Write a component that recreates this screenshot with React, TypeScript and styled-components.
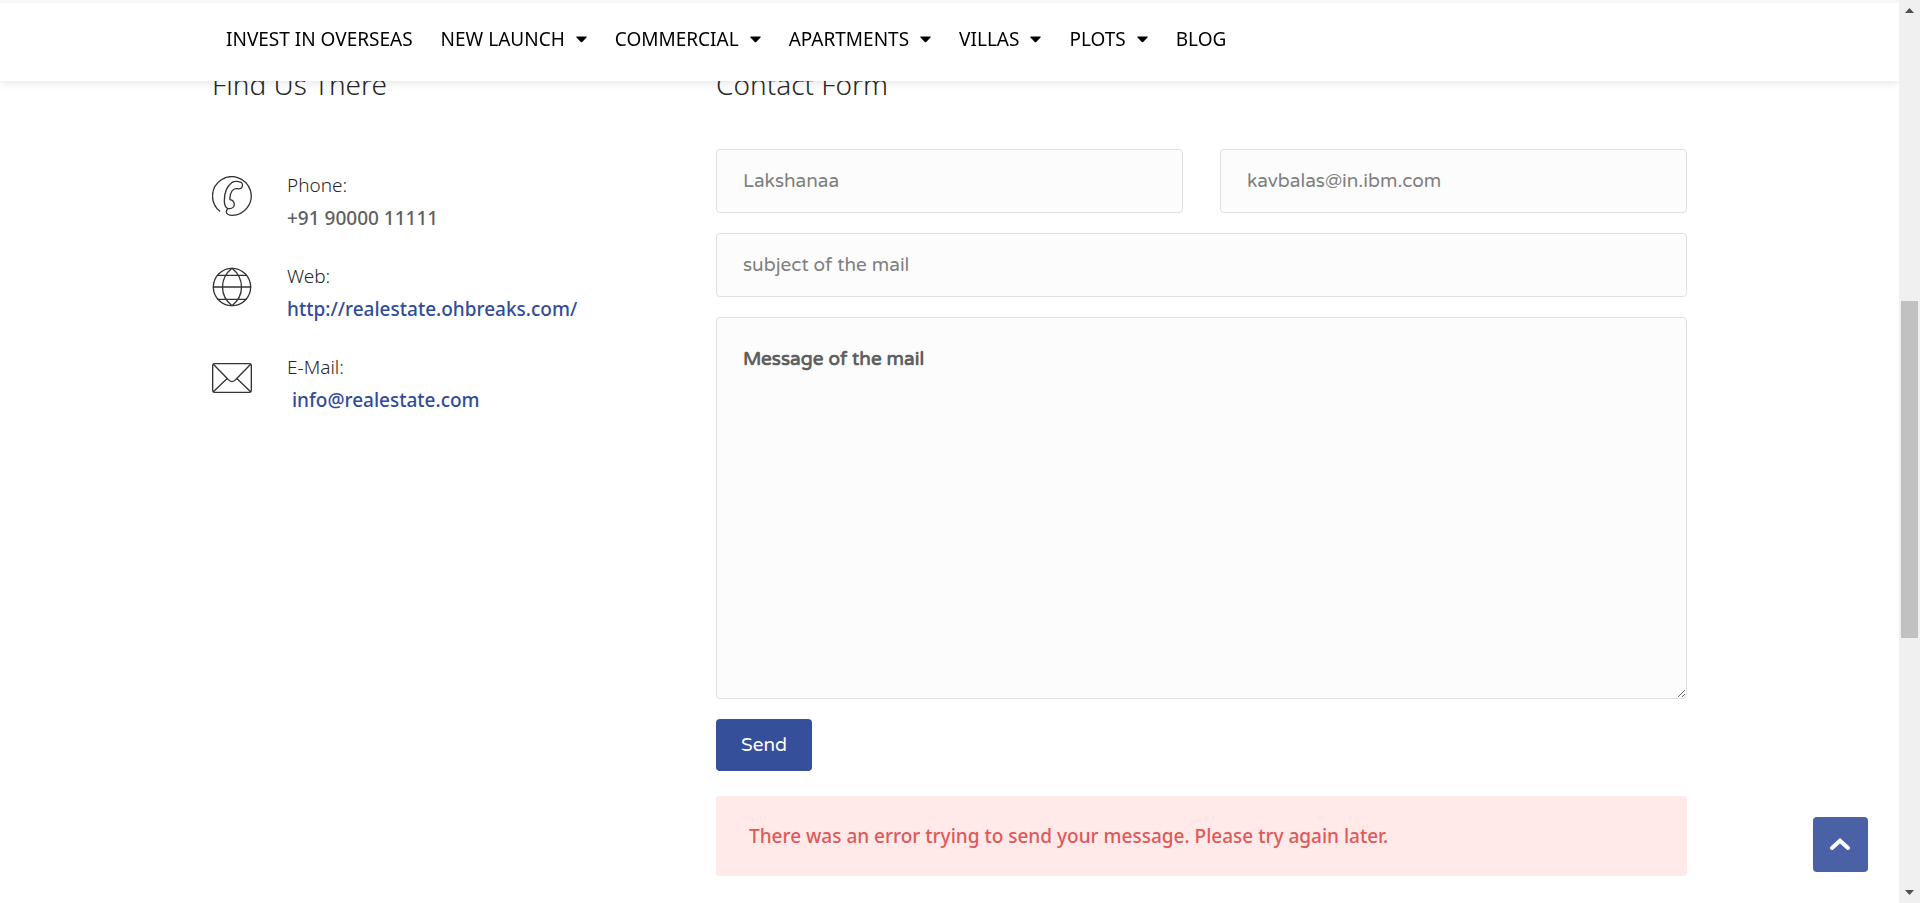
import React from "react";
import styled, { createGlobalStyle } from "styled-components";

const GlobalStyle = createGlobalStyle`
  *, *::before, *::after { box-sizing: border-box; }
  body {
    margin: 0;
    background: #fff;
    color: #282828;
    font-family: "Noto Sans", "Open Sans", sans-serif;
    font-size: 19px;
    line-height: 33px;
  }
`;

const Page = styled.div`
  min-height: 100vh;
  padding-right: 21px;
  border-top: 3px solid #f7f7f7;
`;

const Header = styled.header`
  position: fixed;
  top: 3px;
  left: 0;
  right: 21px;
  z-index: 2;
  background: #fff;
  box-shadow: 0 0 10px rgba(0, 0, 0, 0.15);
  clip-path: inset(0 0 -16px 0);
`;

const Container = styled.div`
  max-width: 1523px;
  margin: 0 auto;
  padding: 0 24px;
`;

const Menu = styled.ul`
  display: flex;
  gap: 28px;
  height: 78px;
  margin: 0;
  padding: 0 14px 6px;
  align-items: center;
  list-style: none;
`;

const MenuLink = styled.a`
  display: flex;
  align-items: center;
  gap: 11px;
  color: #000;
  font-weight: 400;
  text-decoration: none;
  white-space: nowrap;
`;

const Columns = styled.main`
  display: grid;
  grid-template-columns: repeat(3, minmax(0, 1fr));
  column-gap: 37px;
  padding-top: 61px;
`;

const Details = styled.section`
  grid-column: span 1;
`;

const FormColumn = styled.section`
  grid-column: span 2;
`;

const Heading = styled.h2`
  margin: 0;
  font-size: 28px;
  line-height: 40px;
  font-weight: 300;
`;

const ContactList = styled.ul`
  display: grid;
  gap: 25px;
  margin: 65px 0 0;
  padding: 0;
  list-style: none;
`;

const ContactItem = styled.li`
  display: flex;
  gap: 35px;
  align-items: flex-start;
`;

const IconDrawing = styled.svg`
  flex: none;
  width: 40px;
  height: 40px;
  margin-top: 7px;
`;

const ContactLabel = styled.span`
  display: block;
  font-weight: 300;
`;

const ContactValue = styled.span`
  display: block;
  font-weight: 500;
  color: #606060;
  white-space: pre;
  a { color: #304c9b; text-decoration: none; }
`;

const Form = styled.form`
  display: grid;
  grid-template-columns: repeat(2, minmax(0, 1fr));
  gap: 20px 37px;
  margin-top: 45px;
`;

const fieldFont = `"Varela Round", Varela, "Noto Sans", sans-serif`;

const Field = styled.input<{ $wide?: boolean }>`
  grid-column: span ${(p) => (p.$wide ? 2 : 1)};
  width: 100%;
  height: 64px;
  padding: 0 26px;
  border: 1px solid #e0e0e0;
  border-radius: 4px;
  background: #fcfcfc;
  color: #808080;
  font-family: ${fieldFont};
  font-size: 19px;
`;

const Message = styled.textarea`
  grid-column: span 2;
  width: 100%;
  height: 382px;
  padding: 25px 26px;
  border: 1px solid #e0e0e0;
  border-radius: 4px;
  background: #fcfcfc;
  color: #606060;
  font-family: ${fieldFont};
  font-size: 19px;
  font-weight: 700;
  line-height: 33px;
  resize: vertical;
`;

const SendButton = styled.button`
  justify-self: start;
  height: 52px;
  padding: 0 25px;
  border: 0;
  border-radius: 4px;
  background: #354f9b;
  color: #fff;
  font-family: ${fieldFont};
  font-size: 19px;
  font-weight: 500;
`;

const Alert = styled.p`
  margin: 25px 0 27px;
  padding: 24px 33px 23px;
  border-radius: 4px;
  background: #ffe9e9;
  color: #de5959;
  font-weight: 500;
`;

const BackToTop = styled.button`
  position: fixed;
  right: 52px;
  bottom: 31px;
  display: grid;
  place-items: center;
  width: 55px;
  height: 55px;
  padding: 0;
  border: 0;
  border-radius: 4px;
  background: #4a61a5;
`;

const ScrollTrack = styled.div`
  position: fixed;
  inset: 0 0 0 auto;
  z-index: 3;
  display: grid;
  grid-template-rows: 21px 280fr 337fr 244fr 21px;
  justify-items: center;
  align-items: center;
  width: 21px;
  background: #f0f0f0;
`;

const ScrollThumb = styled.div`
  grid-row: 3;
  width: 17px;
  height: 100%;
  background: #c1c1c1;
`;

const ScrollArrow = styled.svg<{ $end?: boolean }>`
  grid-row: ${(p) => (p.$end ? 5 : 1)};
  display: block;
`;

const menu = [
  { label: "INVEST IN OVERSEAS", more: false },
  { label: "NEW LAUNCH", more: true },
  { label: "COMMERCIAL", more: true },
  { label: "APARTMENTS", more: true },
  { label: "VILLAS", more: true },
  { label: "PLOTS", more: true },
  { label: "BLOG", more: false },
];

const Caret = () => (
  <svg width="11" height="7" viewBox="0 0 11 7" aria-hidden="true">
    <path d="M.9.5h9.2c.6 0 .8.6.4 1L6.2 6a1 1 0 0 1-1.4 0L.5 1.5C.1 1.100.3.5.9.5z" fill="#000" />
  </svg>
);

const LineIcon = ({ children }: { children: React.ReactNode }) => (
  <IconDrawing viewBox="0 0 120 120" fill="none" stroke="#333" strokeWidth="4" strokeLinecap="round" strokeLinejoin="round" aria-hidden="true">
    {children}
  </IconDrawing>
);

const PhoneIcon = () => (
  <LineIcon>
    <path d="M23 105A58 58 0 1 1 60 118C50 118 43 113 43 107C43 103 47 101 46 97C39 92 37 84 37 74C37 50 46 30 59 20C67 15 79 16 87 19C92 21 93 30 89 35C85 39 81 39 76 38C70 37 64 39 60 45C54 54 53 63 54 71C61 72 66 77 67 85C67 92 61 98 53 98C50 98 48 98 46 97" />
  </LineIcon>
);

const GlobeIcon = () => (
  <LineIcon>
    <circle cx="60" cy="60" r="56" />
    <path d="M60 4C22 34 22 86 60 116C98 86 98 34 60 4M4 60H116M17 25H103M17 97H103" />
  </LineIcon>
);

const MailIcon = () => (
  <LineIcon>
    <rect x="2" y="17" width="116" height="86" rx="7" />
    <path d="M4 19L48 64C56 73 64 73 72 64L116 19M4 101L44 63M116 101L76 63" />
  </LineIcon>
);

export default function App() {
  return (
    <Page>
      <GlobalStyle />
      <Header>
        <Container as="nav">
          <Menu>
            {menu.map((item) => (
              <li key={item.label}>
                <MenuLink href="#">
                  {item.label}
                  {item.more && <Caret />}
                </MenuLink>
              </li>
            ))}
          </Menu>
        </Container>
      </Header>
      <Container>
        <Columns>
          <Details>
            <Heading>Find Us There</Heading>
            <ContactList>
              <ContactItem>
                <PhoneIcon />
                <div>
                  <ContactLabel>Phone:</ContactLabel>
                  <ContactValue>+91 90000 11111</ContactValue>
                </div>
              </ContactItem>
              <ContactItem>
                <GlobeIcon />
                <div>
                  <ContactLabel>Web:</ContactLabel>
                  <ContactValue><a href="#">http://realestate.ohbreaks.com/</a></ContactValue>
                </div>
              </ContactItem>
              <ContactItem>
                <MailIcon />
                <div>
                  <ContactLabel>E-Mail:</ContactLabel>
                  <ContactValue>{" "}<a href="#">info@realestate.com</a></ContactValue>
                </div>
              </ContactItem>
            </ContactList>
          </Details>
          <FormColumn>
            <Heading>Contact Form</Heading>
            <Form onSubmit={(e) => e.preventDefault()}>
              <Field aria-label="Name" type="text" defaultValue="Lakshanaa" />
              <Field aria-label="Email" type="email" defaultValue="kavbalas@in.ibm.com" />
              <Field aria-label="Subject" type="text" defaultValue="subject of the mail" $wide />
              <Message aria-label="Message" defaultValue="Message of the mail" />
              <SendButton type="submit">Send</SendButton>
            </Form>
            <Alert role="alert">There was an error trying to send your message. Please try again later.</Alert>
          </FormColumn>
        </Columns>
      </Container>
      <BackToTop type="button" aria-label="Back to top">
        <svg width="21" height="13" viewBox="0 0 21 13" fill="none" stroke="#fff" strokeWidth="4" strokeLinecap="round" aria-hidden="true">
          <path d="M2 10L10 2.8L18 10" />
        </svg>
      </BackToTop>
      <ScrollTrack aria-hidden="true">
        <ScrollArrow width="9" height="5" viewBox="0 0 9 5"><path d="M0 5L4.5 0L9 5z" fill="#505050" /></ScrollArrow>
        <ScrollThumb />
        <ScrollArrow width="9" height="5" viewBox="0 0 9 5" $end><path d="M0 0L4.5 5L9 0z" fill="#505050" /></ScrollArrow>
      </ScrollTrack>
    </Page>
  );
}
